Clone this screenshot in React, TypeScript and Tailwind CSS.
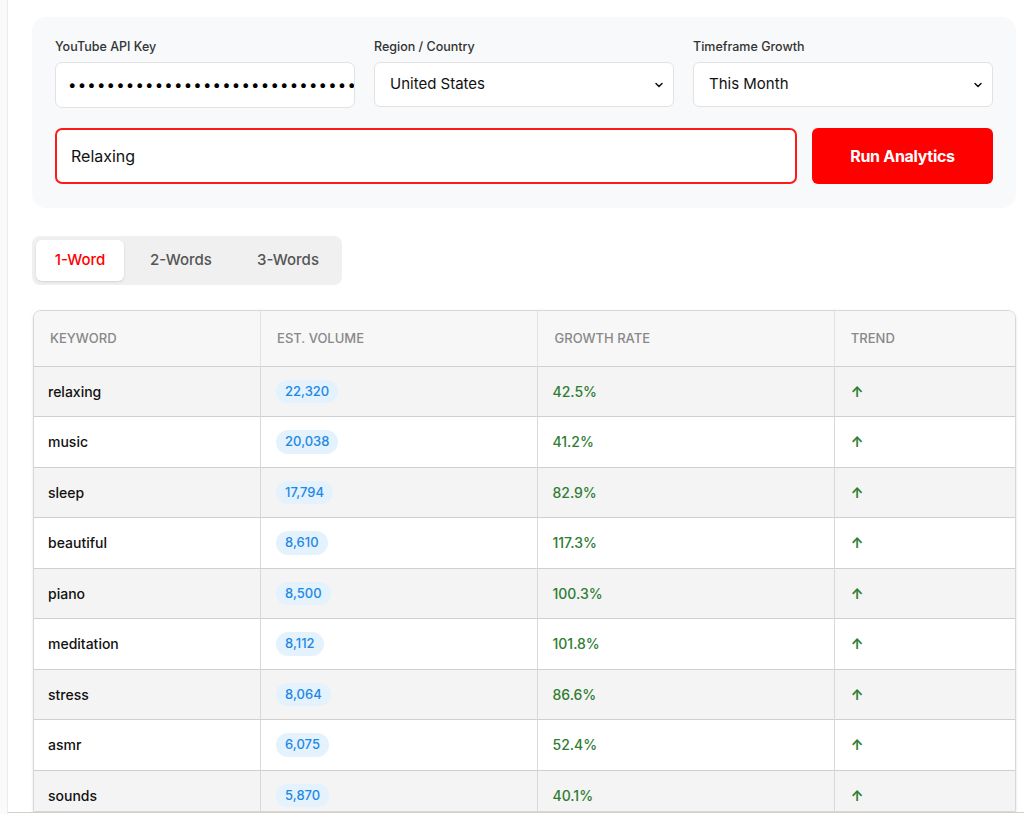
import React from "react";

const rows = [
  ["relaxing", "22,320", "42.5%"],
  ["music", "20,038", "41.2%"],
  ["sleep", "17,794", "82.9%"],
  ["beautiful", "8,610", "117.3%"],
  ["piano", "8,500", "100.3%"],
  ["meditation", "8,112", "101.8%"],
  ["stress", "8,064", "86.6%"],
  ["asmr", "6,075", "52.4%"],
  ["sounds", "5,870", "40.1%"],
];

function Chevron() {
  return (
    <svg width="12" height="12" viewBox="0 0 24 24" fill="none" stroke="#111" strokeWidth="3" strokeLinecap="round" strokeLinejoin="round">
      <path d="M6 9l6 6 6-6" />
    </svg>
  );
}

export default function App() {
  return (
    <div className="flex h-[814px] w-[1024px] overflow-hidden bg-white" style={{ fontFamily: "Inter, 'Noto Sans', sans-serif" }}>
      <div className="w-[8px] shrink-0 bg-[#fafafa] border-r border-[#ececec]" />
      <div className="flex-1 pl-[24px] pt-[17px] flex flex-col border-b border-[#d6cfc6] h-[813px] overflow-hidden">
        <div className="w-[984px] bg-[#f8f9fa] rounded-[14px] px-[23px] pt-[22px] pb-[24px] flex flex-col gap-[20px]">
          <div className="grid grid-cols-3 gap-[19px]">
            {[
              ["YouTube API Key", null],
              ["Region / Country", "United States"],
              ["Timeframe Growth", "This Month"],
            ].map(([label, val], i) => (
              <div key={i} className="flex flex-col gap-[7px]">
                <div className="text-[12.5px] font-medium text-[#333] leading-[16px]">{label}</div>
                {val === null ? (
                  <div className="h-[46px] bg-white border border-[#e2e2e2] rounded-[7px] flex items-center pl-[12px] overflow-hidden text-[15px] tracking-[1.2px] text-black whitespace-nowrap">
                    {"•".repeat(31)}
                  </div>
                ) : (
                  <div className="h-[45px] bg-white border border-[#e2e2e2] rounded-[6px] flex items-center justify-between pl-[15px] pr-[8px] text-[15px] text-[#111]">
                    <span>{val}</span>
                    <Chevron />
                  </div>
                )}
              </div>
            ))}
          </div>
          <div className="flex gap-[15px]">
            <div className="flex-1 h-[56px] bg-white border-2 border-[#ff1a1a] rounded-[7px] flex items-center pl-[14px] text-[16px] text-[#111]">Relaxing</div>
            <div className="w-[181px] h-[56px] bg-[#ff0000] rounded-[6px] flex items-center justify-center text-white text-[16px] font-bold tracking-[-0.3px]">Run Analytics</div>
          </div>
        </div>

        <div className="mt-[28px] w-[310px] h-[49px] bg-[#f0f0f0] rounded-[8px] p-[4px] flex items-center">
          <div className="w-[88px] h-[41px] bg-white rounded-[6px] shadow-sm flex items-center justify-center text-[15px] font-medium text-[#ff0000]">1-Word</div>
          <div className="w-[114px] flex justify-center text-[15px] font-medium text-[#555]">2-Words</div>
          <div className="w-[100px] flex justify-center text-[15px] font-medium text-[#555]">3-Words</div>
        </div>

        <div className="mt-[25px] ml-[1px] w-[983px] border border-[#d8d8d8] rounded-t-[8px] overflow-hidden shadow-sm">
          <table className="w-full border-collapse text-[14px]">
            <thead>
              <tr className="bg-[#f7f7f7] h-[55px]">
                {[["KEYWORD", 227], ["EST. VOLUME", 278], ["GROWTH RATE", 297], ["TREND", 181]].map(([h, w]) => (
                  <th key={h as string} style={{ width: w as number }} className="text-left pl-[16px] text-[13px] font-medium text-[#888] border-r border-[#e2e2e2] last:border-r-0">{h}</th>
                ))}
              </tr>
            </thead>
            <tbody>
              {rows.map(([k, v, g], i) => (
                <tr key={k} className={`h-[50.5px] border-t border-[#cfcfcf] ${i % 2 === 0 ? "bg-[#f4f4f4]" : "bg-white"}`}>
                  <td className="pl-[14px] text-[#111] font-medium border-r border-[#d8d8d8]">{k}</td>
                  <td className="pl-[15px] border-r border-[#d8d8d8]">
                    <span className="inline-block bg-[#e3f2fd] text-[#1e88e5] text-[13px] font-medium rounded-full px-[9px] py-[2px]">{v}</span>
                  </td>
                  <td className="pl-[14px] text-[#2e7d32] font-medium border-r border-[#d8d8d8]">{g}</td>
                  <td className="pl-[16px] text-[#2e7d32] font-bold text-[14px]">↑</td>
                </tr>
              ))}
            </tbody>
          </table>
        </div>
      </div>
    </div>
  );
}
